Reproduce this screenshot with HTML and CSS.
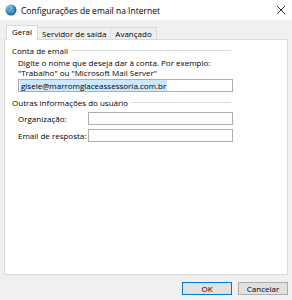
FILE: index.html
```html
<!DOCTYPE html>
<html lang="pt-BR">
<head>
    <meta charset="UTF-8">
    <title>Configurações de email na Internet</title>
    <link rel="stylesheet" href="styles.css">
</head>
<body>
    <!-- Title bar -->
    <div class="titlebar">
        <svg class="app-icon" width="12" height="12" viewBox="0 0 12 12">
            <defs>
                <radialGradient id="globe" cx="0.35" cy="0.3" r="0.8">
                    <stop offset="0" stop-color="#9fd6ff"/>
                    <stop offset="0.6" stop-color="#2f7fd0"/>
                    <stop offset="1" stop-color="#1b4f96"/>
                </radialGradient>
            </defs>
            <circle cx="6" cy="6" r="5.5" fill="url(#globe)"/>
            <path d="M3 3.5 C4.5 2.5 6 3 5.5 4.5 C5 6 3.5 5.5 3 7 C2.2 6 2.3 4.5 3 3.5 Z" fill="#5bb04a"/>
            <path d="M7 6.5 C8.5 6 9.5 7 9 8.5 C8.2 9.5 7 9.5 6.8 8.3 Z" fill="#5bb04a"/>
        </svg>
        <span class="title">Configurações de email na Internet</span>
        <svg class="close" width="10" height="10" viewBox="0 0 10 10">
            <path d="M1 1 L9 9 M9 1 L1 9" stroke="#333" stroke-width="1" fill="none"/>
        </svg>
    </div>

    <!-- Tabs -->
    <div class="tabs">
        <div class="tab active">Geral</div>
        <div class="tab">Servidor de saída</div>
        <div class="tab">Avançado</div>
    </div>

    <div class="panel">
        <div class="group-title">
            <span>Conta de email</span>
            <div class="rule"></div>
        </div>
        <div class="group-body">
            <p class="hint">Digite o nome que deseja dar à conta. Por exemplo:<br>"Trabalho" ou "Microsoft Mail Server"</p>
            <div class="textbox wide"><span class="selected">gisele@marromglaceassessoria.com.br</span></div>
        </div>

        <div class="group-title">
            <span>Outras informações do usuário</span>
            <div class="rule"></div>
        </div>
        <div class="group-body">
            <div class="field">
                <label>Organização:</label>
                <div class="textbox"></div>
            </div>
            <div class="field">
                <label>Email de resposta:</label>
                <div class="textbox"></div>
            </div>
        </div>
    </div>

    <div class="footer">
        <button class="btn default">OK</button>
        <button class="btn">Cancelar</button>
    </div>
</body>
</html>
```

FILE: styles.css
```css
/* General Styles */
body {
    margin: 0;
    width: 292px;
    height: 300px;
    background-color: #f0f0f0;
    font-family: 'Open Sans', 'Noto Sans', sans-serif;
    font-size: 8px;
    color: #000;
    overflow: hidden;
}

.titlebar {
    height: 20px;
    background-color: #fff;
    display: flex;
    align-items: center;
    padding: 0 5px;
}

.app-icon {
    margin-right: 4px;
}

.title {
    font-size: 8.5px;
    flex: 1;
}

.close {
    margin-right: 1px;
}

/* Tabs */
.tabs {
    display: flex;
    align-items: flex-end;
    height: 13px;
    margin-top: 6px;
    padding-left: 6px;
    position: relative;
    z-index: 1;
}

.tab {
    height: 11px;
    line-height: 11px;
    padding: 0 4px;
    border: 1px solid #d9d9d9;
    border-bottom: none;
    background-color: #f0f0f0;
    margin-left: -1px;
}

.tab.active {
    height: 13px;
    line-height: 12px;
    padding: 0 5px 1px 5px;
    background-color: #fff;
    margin-left: 0;
    margin-bottom: -1px;
}

.panel {
    height: 230px;
    margin: 0 4px 0 4px;
    background-color: #fff;
    border: 1px solid #d9d9d9;
    padding: 4px 0 0 7px;
}

.group-title {
    display: flex;
    align-items: center;
    width: 219px;
    height: 12px;
}

.group-title .rule {
    flex: 1;
    height: 0;
    border-top: 1px solid #dcdcdc;
    margin-left: 3px;
}

.group-body {
    padding-left: 6px;
    margin-bottom: 4px;
}

.hint {
    margin: 2px 0 1px 0;
    line-height: 10px;
}

.textbox {
    height: 11px;
    border: 1px solid #adadad;
    background-color: #fff;
    line-height: 11px;
    padding-left: 1px;
}

.textbox.wide {
    width: 212px;
    margin-bottom: 4px;
}

.selected {
    background-color: #cce8ff;
    padding: 0 1px;
}

.field {
    display: flex;
    align-items: center;
    margin-top: 4px;
}

.field label {
    width: 70px;
}

.field .textbox {
    width: 142px;
}

/* Footer buttons */
.footer {
    display: flex;
    justify-content: flex-end;
    gap: 6px;
    padding: 7px 4px 0 0;
}

.btn {
    width: 50px;
    height: 13px;
    padding: 0;
    font-family: 'Open Sans', 'Noto Sans', sans-serif;
    font-size: 8px;
    line-height: 11px;
    background-color: #e1e1e1;
    border: 1px solid #adadad;
    color: #000;
}

.btn.default {
    border-color: #0078d7;
}
```
